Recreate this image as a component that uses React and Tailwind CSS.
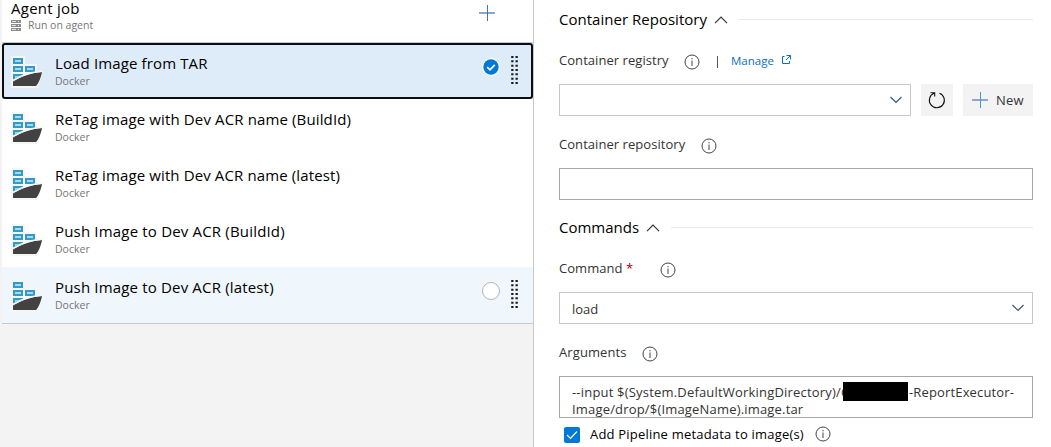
import React from "react";

const tasks = [
  { name: "Load Image from TAR", track: "tracking-[0.13px]", state: "selected" },
  { name: "ReTag image with Dev ACR name (BuildId)", track: "tracking-[0.13px]", state: "idle" },
  { name: "ReTag image with Dev ACR name (latest)", track: "tracking-[0.12px]", state: "idle" },
  { name: "Push Image to Dev ACR (BuildId)", track: "tracking-[0.18px]", state: "idle" },
  { name: "Push Image to Dev ACR (latest)", track: "tracking-[0.17px]", state: "hover" },
];

function DockerIcon() {
  return (
    <svg width="32" height="32" viewBox="0 0 32 32" className="mt-[2px] shrink-0">
      <path d="M0 0H14V8H26V16L32 15L27 32H0Z" fill="#f6f6f6" />
      <path d="M2 2h10v6H2zM2 10h10v6H2zM14 10h10v6H14zM2 18h10v2L2 24z" fill="#3999c6" />
      <path d="M4 4h6v2H4zM4 12h6v2H4zM16 12h6v2h-6zM4 20h5l-5 2z" fill="#9be0f7" />
      <path d="M2 25.500C10 20.500 20 16.800 31 16C30 21 28 27 25 30H2Z" fill="#424242" />
      <path d="M2 24.300C10 19.500 20 15.900 31 15.200" fill="none" stroke="#f6f6f6" strokeWidth="1.400" />
    </svg>
  );
}

function ServerIcon() {
  return (
    <svg width="10" height="12" viewBox="0 0 10 12" className="shrink-0" shapeRendering="crispEdges">
      <path d="M0 0h10v3H0zM0 4h10v3H0zM0 8h10v3H0z" fill="#8c8c8c" />
      <path d="M1 1h4v1H1zM1 5h4v1H1zM1 9h4v1H1zM7 1h1v1H7zM7 5h1v1H7zM7 9h1v1H7z" fill="#e4e4e4" />
    </svg>
  );
}

function Plus({ v = "#4a6fb0" }) {
  return (
    <svg width="16" height="16" viewBox="0 0 16 16" className="shrink-0" shapeRendering="crispEdges">
      <path d="M0 7h16v2H0z" fill="#8ea6d2" />
      <path d="M8 0h1v16H8z" fill={v} />
    </svg>
  );
}

function Grip() {
  return (
    <svg width="8" height="28" viewBox="0 0 8 28" className="block shrink-0">
      {[0, 1, 2, 3, 4, 5, 6].map((i) => (
        <path key={i} d={`M.2 ${i * 4.33}h2.300v2h-2.300zM4.500 ${i * 4.33}h2.300v2h-2.300z`} fill="#1a1a1a" />
      ))}
    </svg>
  );
}

function Info() {
  return (
    <svg width="16" height="16" viewBox="0 0 16 16" className="shrink-0" fill="none" stroke="#444">
      <circle cx="8" cy="8" r="7" />
      <path d="M8 6.500V12M8 4v1.300" />
    </svg>
  );
}

function Chevron({ up }) {
  return (
    <svg width="14" height="8" viewBox="0 0 14 8" className="shrink-0" fill="none" stroke={up ? "#333" : "#39566f"} strokeWidth="1.200">
      <path d={up ? "M1 7.200L7 1.200L13 7.200" : "M1.500 1L7 6.500L12.500 1"} />
    </svg>
  );
}

function TaskRow({ name, track, state }) {
  const look =
    state === "selected"
      ? "bg-[#deebf8] border-[#0b0f14] rounded-[3px]"
      : state === "hover"
      ? "bg-[#eff6fc] border-transparent"
      : "bg-white border-transparent";
  return (
    <div className={`flex h-[56px] items-center border-2 pl-[7px] pr-[12px] ${look}`}>
      <DockerIcon />
      <div className="ml-[12px] flex-1">
        <div className={`text-[15px] leading-[19px] text-black whitespace-nowrap ${track}`}>{name}</div>
        <div className="pt-[1px] text-[10.5px] leading-[15px] text-[#767676]">Docker</div>
      </div>
      {state === "selected" && (
        <svg width="18" height="18" viewBox="0 0 18 18" className="mt-[-8px] mr-[11px]">
          <circle cx="9" cy="9" r="9" fill="#fff" />
          <circle cx="9" cy="9" r="7.700" fill="#0078d7" />
          <path d="M5.200 9.200L8 11.800L12.800 6.800" fill="none" stroke="#fff" strokeWidth="1.800" />
        </svg>
      )}
      {state === "hover" && (
        <span className="mt-[-8px] mr-[11px] size-[18px] rounded-full border border-[#b4b4b4] bg-white" />
      )}
      {state !== "idle" && <span className="mt-[-2px]"><Grip /></span>}
    </div>
  );
}

function Section({ title, track }) {
  return (
    <div className="flex h-[40px] items-center">
      <h2 className={`mt-[-2px] text-[15px] leading-[20px] text-black whitespace-nowrap ${track}`}>{title}</h2>
      <span className="ml-[7px]"><Chevron up /></span>
      <span className="ml-[11px] mt-[-1px] h-px flex-1 bg-[#eaeaea]" />
    </div>
  );
}

const label = "text-[13px] leading-[20px] text-[#333] whitespace-nowrap";

export default function App() {
  return (
    <div className="flex h-[447px] w-[1051px] overflow-hidden bg-white font-['Open_Sans','Noto_Sans',sans-serif]">
      <aside className="w-[534px] shrink-0 border-r border-[#c8c8c8] bg-[#f3f3f3] pl-[2px]">
        <header className="flex h-[43px] items-start justify-between border-b border-[#c8c8c8] bg-white pl-[9px] pr-[38px]">
          <div>
            <div className="text-[15px] leading-[16px] tracking-[0.25px] text-black">Agent job</div>
            <div className="mt-[2px] flex items-center gap-[7px] text-[10.5px] leading-[15px] text-[#767676]">
              <ServerIcon />
              <span>Run on agent</span>
            </div>
          </div>
          <span className="mt-[5px]"><Plus /></span>
        </header>
        <div className="border-b border-[#c8c8c8]">
          {tasks.map((t) => <TaskRow key={t.name} {...t} />)}
        </div>
      </aside>

      <main className="flex-1 pl-[25px] pr-[18px]">
        <Section title="Container Repository" track="tracking-[0.02px]" />
        <div className="flex h-[44px] items-start pt-[11px]">
          <span className={`${label} mt-[-1px] w-[125px] tracking-[0.05px]`}>Container registry</span>
          <span className="mt-[3px]"><Info /></span>
          <span className="ml-[17px] h-[12px] mt-[5px] w-px bg-[#555]" />
          <a className="ml-[13px] mt-[-1px] w-[50px] text-[11.500px] leading-[21px] text-[#106ebe]">Manage</a>
          <svg width="10" height="10" viewBox="0 0 10 10" className="mt-[4px]" fill="none" stroke="#106ebe">
            <path d="M3.500 1.500H1.500V8.500H8.500V6M5.500 .5H9.500V4.500M9.500 .5L5 5" />
          </svg>
        </div>
        <div className="flex h-[32px]">
          <div className="flex w-[352px] items-center justify-end border border-[#c8c8c8] pr-[7px]"><Chevron /></div>
          <button className="ml-[10px] flex w-[32px] items-center justify-center bg-[#f3f3f3]">
            <svg width="18" height="18" viewBox="0 0 18 18" fill="none" stroke="#111" strokeWidth="1.100">
              <path d="M11.500 2.200A7.500 7.500 0 1 1 6 2.300M2.500 1.800H6.700V5.500" />
            </svg>
          </button>
          <button className="ml-[10px] flex w-[70px] items-center bg-[#f3f3f3] pl-[9px]">
            <Plus v="#3e9bd6" />
            <span className={`${label} ml-[8px] tracking-[0.2px]`}>New</span>
          </button>
        </div>
        <div className="flex h-[52px] items-start pt-[19px]">
          <span className={`${label} mt-[-1px] w-[142px] tracking-[0.05px]`}>Container repository</span>
          <span className="mt-[3px]"><Info /></span>
        </div>
        <div className="h-[32px] border border-[#a6a6a6]" />
        <div className="pt-[8px]"><Section title="Commands" track="tracking-[0px]" /></div>
        <div className="flex h-[44px] items-start pt-[11px]">
          <span className={`${label} mt-[-1px] w-[101px] tracking-[0.05px]`}>Command <span className="text-[#a80000]">*</span></span>
          <span className="mt-[3px]"><Info /></span>
        </div>
        <div className="flex h-[32px] items-center justify-between border border-[#c8c8c8] pl-[12px] pr-[7px]">
          <span className={`${label} mt-[2px]`}>load</span>
          <Chevron />
        </div>
        <div className="flex h-[52px] items-start pt-[19px]">
          <span className={`${label} mt-[-1px] w-[83px] tracking-[0.1px]`}>Arguments</span>
          <span className="mt-[3px]"><Info /></span>
        </div>
        <div className="h-[42px] border border-[#a6a6a6] pl-[12px] pt-[7px] text-[13px] leading-[17px] text-[#333]">
          <div className="flex h-[17px] whitespace-nowrap">
            <span className="w-[271px] tracking-[0.19px]">--input $(System.DefaultWorkingDirectory)/C</span>
            <span className="relative mt-[-2px] h-[19px] w-[65px] bg-black" />
            <span className="ml-[1px] tracking-[0.15px]">-ReportExecutor-</span>
          </div>
          <div className="tracking-[0.18px] whitespace-nowrap">Image/drop/$(ImageName).image.tar</div>
        </div>
        <div className="flex items-center pl-[5px] pt-[6px]">
          <span className="mt-[1px] flex size-[16px] items-center justify-center rounded-[2px] bg-[#0078d7]">
            <svg width="12" height="10" viewBox="0 0 12 10" fill="none" stroke="#fff" strokeWidth="1.200"><path d="M1 5L4.500 8.500L11 1.500" /></svg>
          </span>
          <span className="ml-[10px] w-[225px] text-[13px] leading-[20px] tracking-[0.2px] whitespace-nowrap text-black">Add Pipeline metadata to image(s)</span>
          <Info />
        </div>
      </main>
    </div>
  );
}
